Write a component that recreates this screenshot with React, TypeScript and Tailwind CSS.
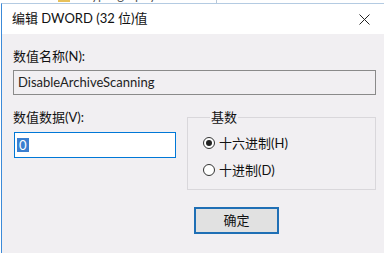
const font = { fontFamily: 'Lato, "Noto Sans CJK SC", sans-serif' };

function Radio({ checked, label }: { checked?: boolean; label: string }) {
  return (
    <div className="flex h-4 items-center gap-[4px]">
      <span className="flex h-[12px] w-[12px] items-center justify-center rounded-full border border-[#333] bg-white">
        {checked && <span className="h-[6px] w-[6px] rounded-full bg-[#222]" />}
      </span>
      <span className="text-[13px] leading-4 text-[#111]">{label}</span>
    </div>
  );
}

function App() {
  return (
    <div className="flex h-[253px] w-[384px] flex-col overflow-hidden bg-white" style={font}>
      {/* window behind the dialog, only its bottom edge shows */}
      <div className="flex h-[3px] shrink-0 overflow-hidden bg-white">
        <span className="ml-[58px] mt-[-12px] h-[14px] w-[12px] shrink-0 bg-[#e8c15a]" />
        <span className="ml-[8px] mt-[-12px] text-[13px] leading-[14px] text-[#555]">Cryptography</span>
        <span className="ml-[60px] h-full w-px bg-[#b8c8d8]" />
      </div>

      <div className="ml-[1px] flex flex-1 flex-col border-l border-t border-l-[#3c8ad8] border-t-[#b4cbe2]">
        {/* title bar */}
        <div className="flex h-[30px] shrink-0 items-center justify-between bg-white pl-[10px] pr-[14px]">
          <span className="text-[13px] text-[#111]">编辑 DWORD (32 位)值</span>
          <svg width="11" height="11" viewBox="0 0 11 11">
            <path d="M0.5 0.5 L10.5 10.5 M10.5 0.5 L0.5 10.5" stroke="#222" strokeWidth="1" />
          </svg>
        </div>

        {/* body */}
        <div className="flex flex-1 flex-col bg-[#f1eff2] pl-[11px] pt-[14px]">
          <div className="h-4 text-[13px] leading-4 text-[#111]">数值名称(N):</div>
          <div className="mt-[6px] flex h-[25px] w-[363px] items-center border border-[#8a8a8a] bg-[#f1eff2] pl-[4px] text-[13px] text-[#222]">
            DisableArchiveScanning
          </div>

          <div className="mt-[14px] flex">
            <div className="flex w-[163px] flex-col">
              <div className="h-4 text-[13px] leading-4 text-[#111]">数值数据(V):</div>
              <div className="ml-[1px] mt-[7px] flex h-[26px] w-[162px] items-center border border-[#0078d7] bg-white pl-[2px]">
                <span className="bg-[#3a7fd0] px-[2px] text-[13px] leading-[14px] text-white">0</span>
              </div>
            </div>

            <fieldset className="ml-[11px] w-[189px] border border-[#d9d7db] pb-[11px] pl-[15px]">
              <legend className="ml-[7px] px-[1px] text-[13px] leading-4 text-[#111]">基数</legend>
              <div className="mt-[10px]">
                <Radio checked label="十六进制(H)" />
              </div>
              <div className="mt-[11px]">
                <Radio label="十进制(D)" />
              </div>
            </fieldset>
          </div>

          <div className="ml-[181px] mt-[17px] flex h-[27px] w-[85px] items-center justify-center border-2 border-[#1f6fb5] bg-[#e1e1e1] text-[13px] text-[#111]">
            确定
          </div>
        </div>
      </div>
    </div>
  );
}

export default App;
